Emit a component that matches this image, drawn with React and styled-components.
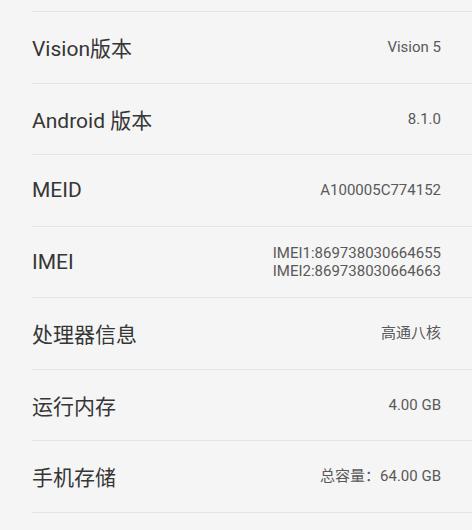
import React from 'react';
import styled, { createGlobalStyle } from 'styled-components';

const GlobalStyle = createGlobalStyle`
  html, body {
    margin: 0;
    padding: 0;
    background: #f5f5f5;
  }
  body {
    font-family: Roboto, "Noto Sans CJK SC", sans-serif;
    -webkit-font-smoothing: antialiased;
  }
`;

const items = [
  { label: 'Vision版本', value: ['Vision 5'] },
  { label: 'Android 版本', value: ['8.1.0'] },
  { label: 'MEID', value: ['A100005C774152'] },
  { label: 'IMEI', value: ['IMEI1:869738030664655', 'IMEI2:869738030664663'] },
  { label: '处理器信息', value: ['高通八核'] },
  { label: '运行内存', value: ['4.00 GB'] },
  { label: '手机存储', value: ['总容量：64.00 GB'] },
];

const App = () => (
  <Page>
    <GlobalStyle />
    <List>
      {items.map(item => (
        <Row key={item.label}>
          <Label>{item.label}</Label>
          <Value>
            {item.value.map(line => (
              <ValueLine key={line}>{line}</ValueLine>
            ))}
          </Value>
        </Row>
      ))}
    </List>
  </Page>
);

const Page = styled.div`
  width: 472px;
  height: 530px;
  overflow: hidden;
  background: #f5f5f5;
  padding-top: 11px;
  box-sizing: border-box;
`;

const List = styled.ul`
  list-style: none;
  margin: 0 0 0 32px;
  padding: 0;
  border-top: 1px solid #e4e4e4;
`;

const Row = styled.li`
  display: flex;
  align-items: center;
  justify-content: space-between;
  height: 70.5px;
  padding-right: 31px;
  border-bottom: 1px solid #e4e4e4;
`;

const Label = styled.span`
  font-size: 21px;
  color: #363636;
  letter-spacing: 0;
`;

const Value = styled.div`
  display: flex;
  flex-direction: column;
  align-items: flex-end;
  font-size: 15px;
  line-height: 18px;
  color: #595959;
`;

const ValueLine = styled.span`
  white-space: nowrap;
`;

export default App;
